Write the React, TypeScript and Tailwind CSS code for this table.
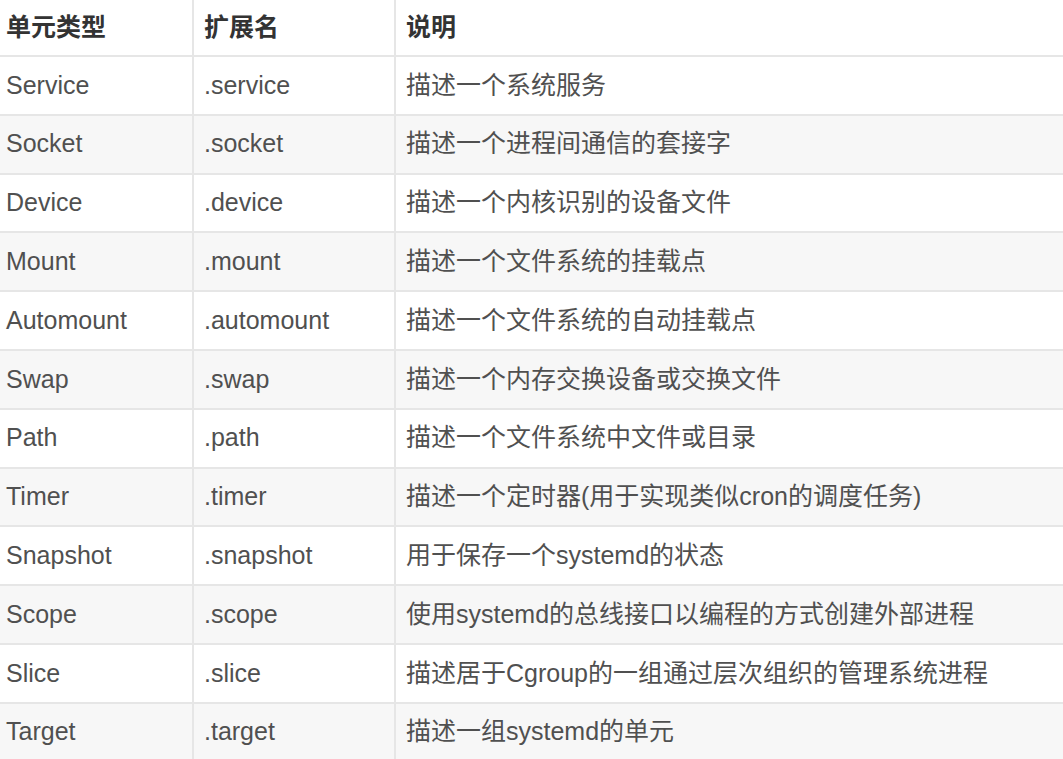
import React from 'react';

const rows: [string, string, string][] = [
  ['Service', '.service', '描述一个系统服务'],
  ['Socket', '.socket', '描述一个进程间通信的套接字'],
  ['Device', '.device', '描述一个内核识别的设备文件'],
  ['Mount', '.mount', '描述一个文件系统的挂载点'],
  ['Automount', '.automount', '描述一个文件系统的自动挂载点'],
  ['Swap', '.swap', '描述一个内存交换设备或交换文件'],
  ['Path', '.path', '描述一个文件系统中文件或目录'],
  ['Timer', '.timer', '描述一个定时器(用于实现类似cron的调度任务)'],
  ['Snapshot', '.snapshot', '用于保存一个systemd的状态'],
  ['Scope', '.scope', '使用systemd的总线接口以编程的方式创建外部进程'],
  ['Slice', '.slice', '描述居于Cgroup的一组通过层次组织的管理系统进程'],
  ['Target', '.target', '描述一组systemd的单元'],
];

export default function App() {
  return (
    <div
      className="w-[1063px] h-[759px] overflow-hidden bg-white text-[25px] text-[#505050]"
      style={{ fontFamily: '"Liberation Sans", "Noto Sans CJK SC", sans-serif' }}
    >
      {/* header */}
      <div className="flex h-[57px] border-b-2 border-[#e6e6e6] bg-white font-bold text-[#333]">
        <div className="w-[194px] flex items-center pl-[6px] border-r-2 border-[#e6e6e6]">单元类型</div>
        <div className="w-[202px] flex items-center pl-[10px] border-r-2 border-[#e6e6e6]">扩展名</div>
        <div className="flex-1 flex items-center pl-[10px]">说明</div>
      </div>

      {rows.map(([type, ext, desc], i) => (
        <div
          key={type}
          className={`flex h-[58.8px] border-b-2 border-[#e6e6e6] ${i % 2 === 1 ? 'bg-[#f7f7f7]' : 'bg-white'}`}
        >
          <div className="w-[194px] flex items-center pl-[6px] border-r-2 border-[#e6e6e6]">{type}</div>
          <div className="w-[202px] flex items-center pl-[10px] border-r-2 border-[#e6e6e6]">{ext}</div>
          <div className="flex-1 flex items-center pl-[10px] whitespace-nowrap">{desc}</div>
        </div>
      ))}
    </div>
  );
}
